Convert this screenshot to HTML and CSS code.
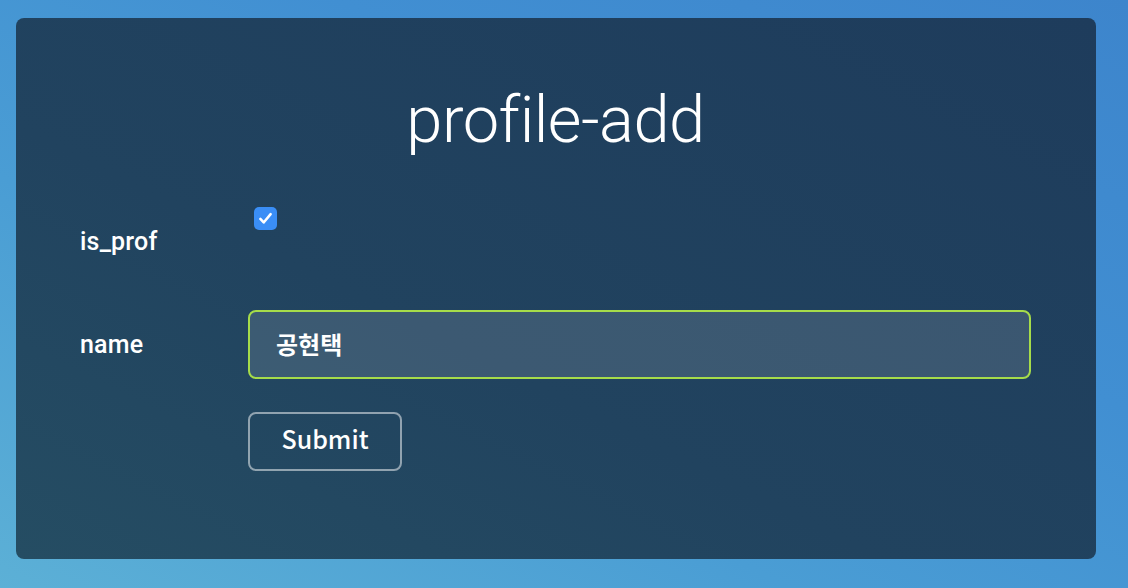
FILE: index.html
```html
<!DOCTYPE html>
<html lang="ko">
<head>
<meta charset="utf-8">
<title>profile-add</title>
<link rel="stylesheet" href="styles.css">
</head>
<body>
<main class="card">
  <h1 class="title">profile-add</h1>
  <form class="form">
    <div class="row row-check">
      <label class="label" for="is_prof">is_prof</label>
      <span class="check" id="is_prof">
        <svg viewBox="0 0 24 24" width="19" height="19"><path d="M5.5 12.5l4.2 4.5L18.5 6.5" fill="none" stroke="#fff" stroke-width="3.2" stroke-linecap="round" stroke-linejoin="round"/></svg>
      </span>
    </div>
    <div class="row row-name">
      <label class="label" for="name">name</label>
      <div class="input" id="name">공현택</div>
    </div>
    <div class="row row-submit">
      <span class="label"></span>
      <button type="button" class="btn">Submit</button>
    </div>
  </form>
</main>
</body>
</html>
```

FILE: styles.css
```css
html, body {
  margin: 0;
  height: 100%;
}
body {
  background: linear-gradient(to top right, #5cb0d6 0%, #4a9dd4 35%, #418fd2 65%, #3d85cc 100%);
  padding: 18px 32px 29px 16px;
  box-sizing: border-box;
  font-family: Roboto, "Liberation Sans", sans-serif;
  color: #fff;
}
.card {
  height: 541px;
  box-sizing: border-box;
  background: linear-gradient(to top right, #254d63 0%, #21435f 40%, #1e3c5c 100%);
  border-radius: 8px;
  padding: 62px 65px 0 64px;
}
.title {
  margin: 0 0 47px;
  text-align: center;
  font-weight: 300;
  font-size: 65px;
  line-height: 80px;
  letter-spacing: -0.5px;
}
.form {
  display: flex;
  flex-direction: column;
}
.row {
  display: flex;
  align-items: center;
}
.label {
  width: 168px;
  flex: none;
  font-size: 25px;
  font-weight: 500;
  letter-spacing: 0.2px;
}
.row-check {
  height: 68px;
}
.check {
  align-self: flex-start;
  margin-left: 6px;
  width: 23px;
  height: 23px;
  border-radius: 5px;
  background: #3a8ef6;
  display: flex;
  align-items: center;
  justify-content: center;
}
.row-name {
  margin-top: 35px;
}
.input {
  flex: 1;
  height: 69px;
  box-sizing: border-box;
  border: 2px solid #a6dc4a;
  border-radius: 8px;
  background: rgba(255, 255, 255, 0.12);
  padding: 0 26px 2px;
  display: flex;
  align-items: center;
  font-family: "Noto Sans CJK KR", sans-serif;
  font-size: 24px;
  font-weight: 700;
}
.row-submit {
  margin-top: 33px;
}
.btn {
  height: 59px;
  width: 154px;
  box-sizing: border-box;
  border: 2px solid rgba(255, 255, 255, 0.5);
  border-radius: 8px;
  background: transparent;
  color: #fff;
  font-family: "Noto Sans CJK KR", "Noto Sans", sans-serif;
  font-size: 25px;
  font-weight: 500;
  padding: 0 0 7px;
}
```
